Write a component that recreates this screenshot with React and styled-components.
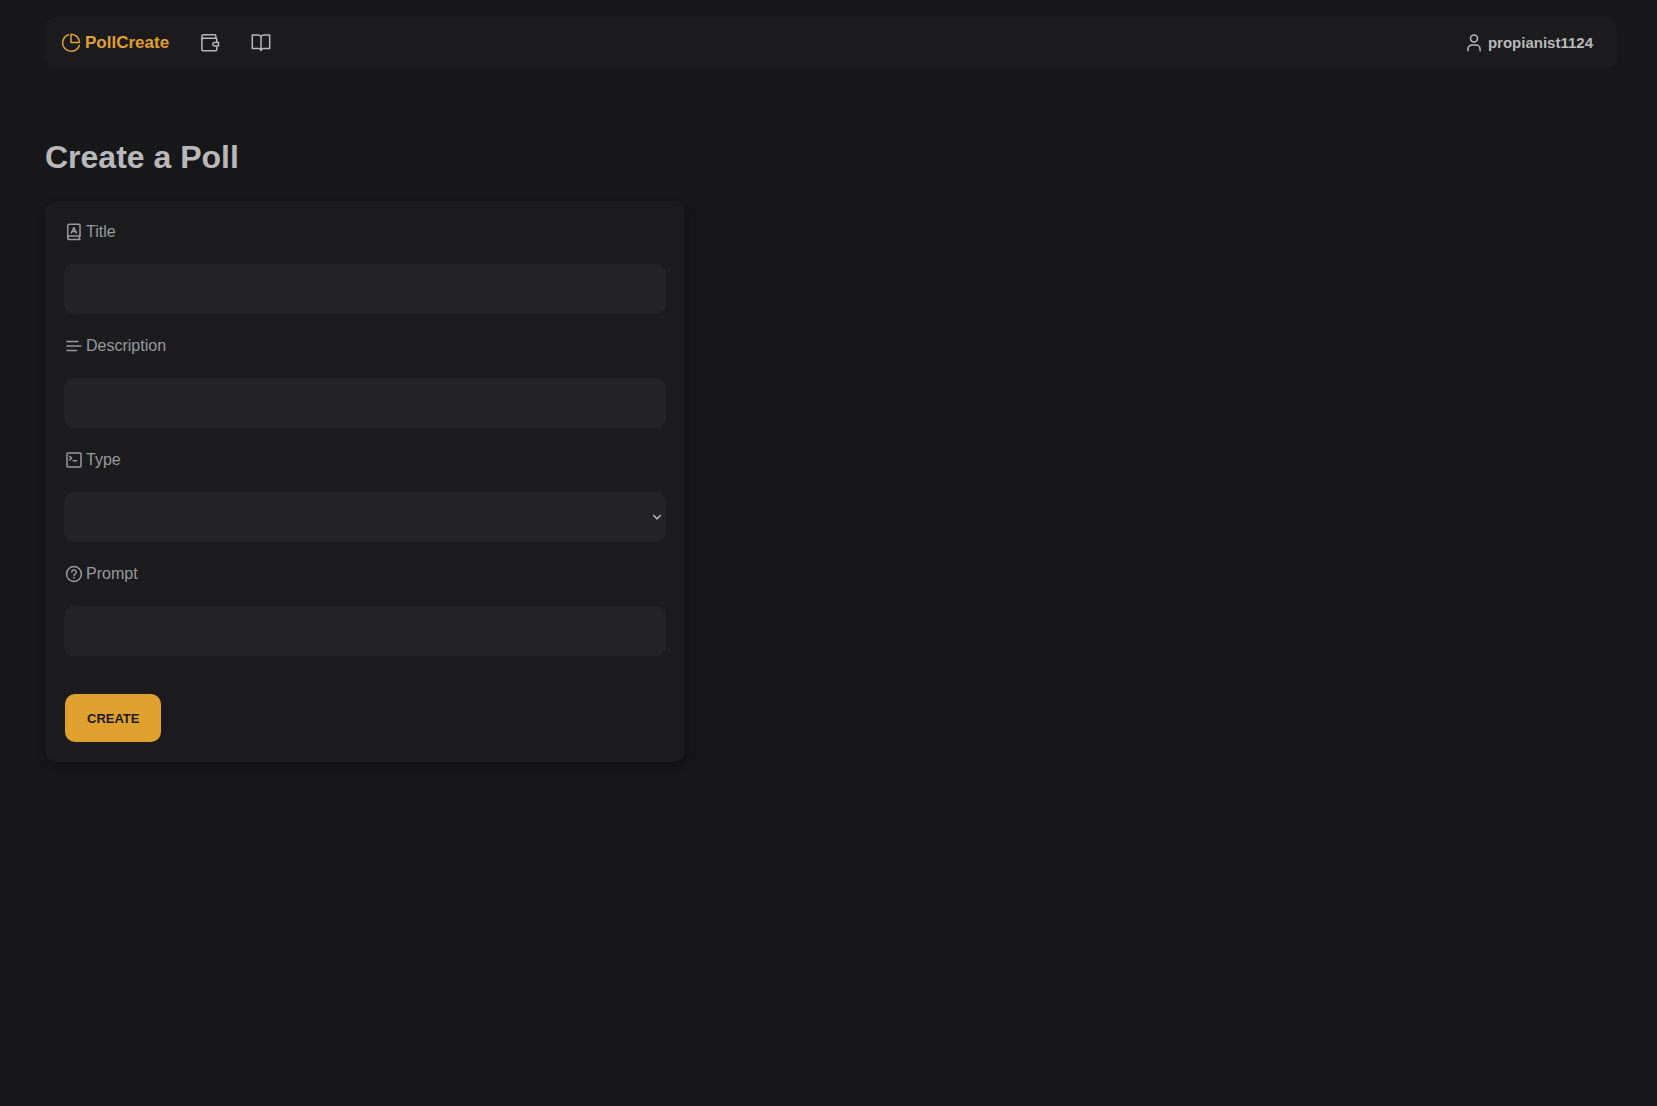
import React, { useState } from "react";
import styled, { createGlobalStyle } from "styled-components";

const GlobalStyle = createGlobalStyle`
  * {
    box-sizing: border-box;
  }
  body {
    margin: 0;
    background: #171719;
    color: #b8b8ba;
    font-family: "Liberation Sans", Arial, sans-serif;
  }
`;

const PieIcon = () => (
  <Icon $size={20} viewBox="0 0 20 20" aria-hidden="true">
    <path d="M7.6 1.7A8.5 8.5 0 1 0 18.3 12.4" />
    <path d="M10 1.2v8.3h8.5A8.4 8.4 0 0 0 10 1.2Z" />
  </Icon>
);

const WalletIcon = () => (
  <Icon $size={20} viewBox="0 0 20 20" aria-hidden="true">
    <path d="M16.8 8.8V6.2a1 1 0 0 0-1-1H2.9a1 1 0 0 0-1 1v10.6a1 1 0 0 0 1 1h12.9a1 1 0 0 0 1-1v-2.6" />
    <path d="M1.9 6V3a1.3 1.3 0 0 1 1.3-1.3h11.7a.9.9 0 0 1 .9.9v2.6" />
    <path d="M14.5 9.5h4v3.4h-4a1.7 1.7 0 0 1 0-3.4Z" />
  </Icon>
);

const BookIcon = () => (
  <Icon $size={20} viewBox="0 0 20 20" aria-hidden="true">
    <path d="M10 3.8v13M10 3.8C9.4 2.5 8.4 2 7 2H1.3v13.6h6c1.4 0 2.2.6 2.7 1.9.5-1.3 1.3-1.9 2.7-1.9h6V2H13c-1.4 0-2.4.5-3 1.8Z" />
  </Icon>
);

const UserIcon = () => (
  <Icon $size={20} viewBox="0 0 20 20" aria-hidden="true">
    <circle cx="10" cy="5.4" r="3.5" />
    <path d="M3.9 17.7v-1.4a4.2 4.2 0 0 1 4.2-4.2h3.8a4.2 4.2 0 0 1 4.2 4.2v1.4" />
  </Icon>
);

const TitleIcon = () => (
  <Icon $size={18} viewBox="0 0 18 18" aria-hidden="true">
    <path d="M15 13.1V2a.8.8 0 0 0-.8-.8H4.3A1.6 1.6 0 0 0 2.7 2.8v12.1" />
    <path d="M15 13.1H4.4a1.7 1.7 0 0 0 0 3.5H15M14.4 13.1v3.5" />
    <path d="m6.3 10 2.6-5.4L11.5 10M7.2 8.4h3.4" />
  </Icon>
);

const TextIcon = () => (
  <Icon $size={18} viewBox="0 0 18 18" aria-hidden="true">
    <path d="M2 4.5h11M2 9h14M2 13.5h9.5" />
  </Icon>
);

const TypeIcon = () => (
  <Icon $size={18} viewBox="0 0 18 18" aria-hidden="true">
    <rect x="2" y="2" width="14" height="14" rx="1" />
    <path d="m4.6 5.2 2 1.9-2 1.9M8.3 9.8h3.2" />
  </Icon>
);

const PromptIcon = () => (
  <Icon $size={18} viewBox="0 0 18 18" aria-hidden="true">
    <circle cx="9" cy="9" r="7.4" />
    <path d="M6.8 7.1a2.2 2.2 0 1 1 3.6 1.7c-.8.6-1.4.9-1.4 1.8M9 12.6v.4" />
  </Icon>
);

function App() {
  const [form, setForm] = useState({
    title: "",
    description: "",
    type: "",
    prompt: "",
  });

  const handleChange = (e) => {
    setForm({ ...form, [e.target.name]: e.target.value });
  };

  return (
    <Page>
      <GlobalStyle />
      <Navbar>
        <Brand href="#">
          <PieIcon />
          PollCreate
        </Brand>
        <NavLink href="#wallet" aria-label="Wallet">
          <WalletIcon />
        </NavLink>
        <NavLink href="#polls" aria-label="Polls">
          <BookIcon />
        </NavLink>
        <Account href="#account">
          <UserIcon />
          propianist1124
        </Account>
      </Navbar>

      <main>
        <Heading>Create a Poll</Heading>
        <Form onSubmit={(e) => e.preventDefault()}>
          <Label htmlFor="title">
            <TitleIcon />
            Title
          </Label>
          <Input id="title" name="title" value={form.title} onChange={handleChange} />

          <Label htmlFor="description">
            <TextIcon />
            Description
          </Label>
          <Input
            id="description"
            name="description"
            value={form.description}
            onChange={handleChange}
          />

          <Label htmlFor="type">
            <TypeIcon />
            Type
          </Label>
          <SelectWrapper>
            <Select id="type" name="type" value={form.type} onChange={handleChange}>
              <option value=""></option>
              <option value="multiple">Multiple choice</option>
              <option value="text">Text</option>
            </Select>
            <Chevron viewBox="0 0 10 10" aria-hidden="true">
              <path d="m1.2 3 3.8 3.8L8.8 3" />
            </Chevron>
          </SelectWrapper>

          <Label htmlFor="prompt">
            <PromptIcon />
            Prompt
          </Label>
          <Input id="prompt" name="prompt" value={form.prompt} onChange={handleChange} />

          <CreateButton type="submit">CREATE</CreateButton>
        </Form>
      </main>
    </Page>
  );
}

const Page = styled.div`
  padding: 17px 40px 40px 45px;
`;

const Icon = styled.svg`
  display: block;
  flex: none;
  width: ${(props) => props.$size}px;
  height: ${(props) => props.$size}px;
  fill: none;
  stroke: currentColor;
  stroke-width: 1.5;
  stroke-linecap: round;
  stroke-linejoin: round;
`;

const Navbar = styled.nav`
  display: flex;
  align-items: center;
  height: 51px;
  padding: 0 24px 0 16px;
  border-radius: 10px;
  background: #1b1b1d;
`;

const Brand = styled.a`
  display: flex;
  align-items: center;
  gap: 4px;
  color: #e0a030;
  font-size: 17px;
  font-weight: 700;
  text-decoration: none;
`;

const NavLink = styled.a`
  margin-left: 31px;
  color: #b8b8ba;
`;

const Account = styled.a`
  display: flex;
  align-items: center;
  gap: 4px;
  margin-left: auto;
  color: #b8b8ba;
  font-size: 15px;
  font-weight: 700;
  text-decoration: none;
`;

const Heading = styled.h1`
  margin: 69px 0 23px;
  font-size: 32px;
  line-height: 41px;
  font-weight: 700;
`;

const Form = styled.form`
  display: flex;
  flex-direction: column;
  gap: 20px;
  max-width: 640px;
  padding: 19px 19px 20px;
  border-radius: 12px;
  background: #1b1b1d;
  box-shadow: 2px 4px 8px rgba(0, 0, 0, 0.3);
`;

const Label = styled.label`
  display: flex;
  align-items: center;
  gap: 3px;
  height: 24px;
  padding: 0 1px;
  color: #98989f;
  font-size: 16px;
`;

const Input = styled.input`
  width: 100%;
  height: 50px;
  padding: 0 16px;
  border: none;
  border-radius: 10px;
  outline: none;
  background: #232325;
  color: #b8b8ba;
  font: inherit;
`;

const SelectWrapper = styled.div`
  position: relative;
`;

const Select = styled.select`
  display: block;
  width: 100%;
  height: 50px;
  padding: 0 24px 0 16px;
  border: none;
  border-radius: 10px;
  outline: none;
  appearance: none;
  background: #232325;
  color: #b8b8ba;
  font: inherit;
`;

const Chevron = styled.svg`
  position: absolute;
  top: 20px;
  right: 4px;
  width: 10px;
  height: 10px;
  fill: none;
  stroke: #b0b0b2;
  stroke-width: 1.6;
  pointer-events: none;
`;

const CreateButton = styled.button`
  align-self: flex-start;
  height: 48px;
  margin: 18px 1px 0;
  padding: 0 22px;
  border: none;
  border-radius: 10px;
  background: #e0a030;
  color: #1b1b1d;
  font-family: inherit;
  font-size: 13px;
  font-weight: 700;
  cursor: pointer;
`;

export default App;
